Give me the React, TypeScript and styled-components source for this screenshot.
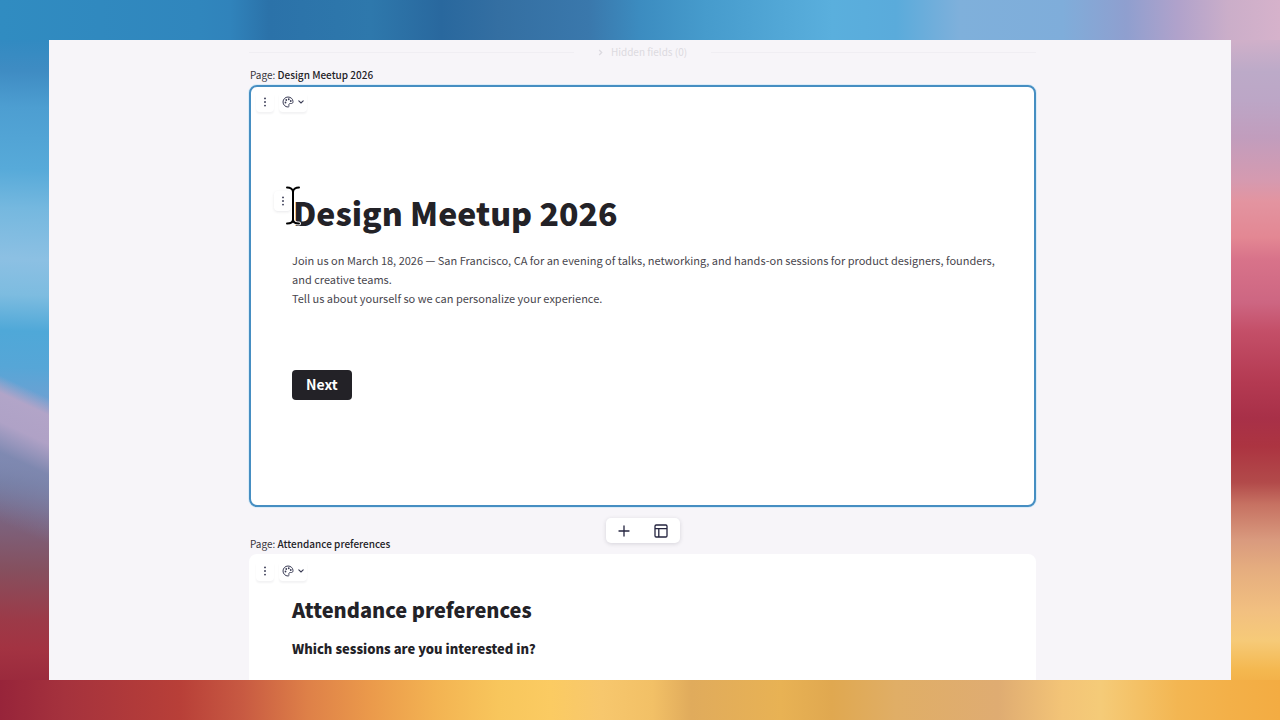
import React from "react";
import styled, { createGlobalStyle, css } from "styled-components";

const GlobalStyle = createGlobalStyle`
  *, *::before, *::after { box-sizing: border-box; }
  body {
    margin: 0;
    font-family: "Noto Sans CJK SC", "Noto Sans", sans-serif;
    color: #232227;
  }
  h1, h2, h3, p { margin: 0; }
  button { font: inherit; color: inherit; border: 0; padding: 0; cursor: pointer; }
`;

const topEdge = `linear-gradient(90deg, #308cc1 0, #3086bd 15.6%, #3083bb 18%, #2b72a9 21%, #2e78ac 29%, #29689e 34.5%, #346fa2 39%, #3a78ac 46%, #3c8cc0 50%, #469bcc 55%, #5aafdd 65%, #5aabdb 70%, #7fb0db 75%, #7fadda 83%, #8f9fcf 88%, #b0a2cb 92%, #cbaec9 96%, #d6b2cb 100%)`;
const bottomEdge = `linear-gradient(90deg, #97243a 0, #a5323d 5%, #b83f38 14%, #c85a42 19%, #de8048 24%, #eb9a4b 29%, #f3b352 34%, #f8c65c 39%, #fbcb62 43%, #f7c76d 47%, #f2c066 51%, #e0ab5c 54%, #e8b254 61%, #e0a850 65%, #e0ae66 70%, #dfac72 78%, #f3c477 83%, #f5cb78 86%, #f3b652 92%, #f3b048 96%, #f3ac42 100%)`;
const leftEdge = `linear-gradient(182deg, #308cc1 0, #318ac1 5.5%, #3f8cc3 10%, #4d9ed1 15%, #57aad9 23.6%, #75b8df 29%, #8cc0e3 36%, #7dbce0 41%, #4fa8d8 46%, #56a6d7 51%, #6fa0d2 56%, #7f91c0 62%, #71799f 67%, #7b6480 72%, #85505f 79%, #9c3a48 86%, #a33342 90%, #98273b 96%, #8f2038 100%)`;
const leftCloud = `linear-gradient(205deg, #b9a5c700 12%, #b9a5c7e6 21%, #b5a3c6e6 36%, #8089b0cc 52%, #71799f00 88%)`;
const rightEdge = `linear-gradient(180deg, #d0b0ca 0, #d0b0c9 5.5%, #bcaac8 10%, #bca6c6 14%, #c19dbd 19%, #d59ab0 25%, #e394a0 28%, #e38793 33%, #d8738a 36%, #cd6682 42%, #c44f68 46%, #b43a52 53%, #a83048 58%, #ac3441 62%, #b24a4a 67%, #c67162 70%, #d99a7e 75%, #e5ad7f 79%, #f2c080 85%, #f6ca78 89%, #f4b850 93%, #f3b048 95%, #f1a53a 100%)`;

const Wallpaper = styled.div`
  display: flex;
  height: 100vh;
  padding: 40px 49px;
  background:
    ${topEdge} top / 100% 40px no-repeat,
    ${bottomEdge} bottom / 100% 40px no-repeat,
    ${leftCloud} 0 375px / 49px 170px no-repeat,
    ${leftEdge} left / 49px 100% no-repeat,
    ${rightEdge} right / 49px 100% no-repeat;
`;

const Editor = styled.main`
  flex: 1;
  min-width: 0;
  overflow: hidden;
  padding-left: 5px;
  background: #f7f5f9;
`;

const Column = styled.div`
  max-width: 787px;
  margin: 0 auto;
`;

const HiddenFields = styled.button`
  display: flex;
  align-items: center;
  gap: 24px;
  width: 100%;
  height: 24px;
  background: none;
  color: #dcdae0;
  font-size: 10px;
  line-height: 16px;

  &::before, &::after {
    content: "";
    flex: 1;
    height: 1px;
    background: #f0eef3;
  }
`;

const HiddenLabel = styled.span`
  display: flex;
  align-items: center;
  gap: 8px;
`;

const PageLabel = styled.p`
  padding-left: 1px;
  font-size: 10px;
  line-height: 21px;
  color: #38363d;

  strong { font-weight: 500; color: #232227; }
`;

const Card = styled.section<{ $selected?: boolean }>`
  border-radius: 8px;
  padding: 5px 5px 0;
  border: 2px solid #fff;
  background: #fff;
  ${(p) =>
    p.$selected
      ? css`
          min-height: 422px;
          border-color: #468ec2;
          box-shadow: 0 0 0 1px #dcecf8;
        `
      : css`
          min-height: 200px;
        `}
`;

const CardTools = styled.div`
  display: flex;
  gap: 5px;
`;

const ToolButton = styled.button<{ $wide?: boolean }>`
  display: flex;
  align-items: center;
  justify-content: center;
  gap: 4px;
  width: ${(p) => (p.$wide ? 28 : 18)}px;
  height: 20px;
  border-radius: 4px;
  background: #fff;
  color: #3a3c55;
  box-shadow: 0 2px 2px #1c1a300d;
`;

const Content = styled.div<{ $intro?: boolean }>`
  padding: ${(p) => (p.$intro ? "74px 28px 0 36px" : "13px 28px 0 36px")};
`;

const TitleBlock = styled.div`
  position: relative;
`;

const Handle = styled.button`
  position: absolute;
  left: -18px;
  top: 5px;
  display: flex;
  align-items: center;
  justify-content: center;
  width: 17px;
  height: 20px;
  border-radius: 4px;
  background: #fff;
  color: #3a3c55;
  box-shadow: 0 1px 3px #1c1a301a;
`;

const Pointer = styled.svg`
  position: absolute;
  left: -7px;
  top: -1px;
`;

const Title = styled.h1`
  padding-left: 1px;
  font-size: 32px;
  line-height: 52px;
  font-weight: 900;
`;

const Intro = styled.p`
  margin-top: 13px;
  font-size: 11px;
  line-height: 19px;
  color: #48464d;
`;

const NextButton = styled.button`
  margin-top: 62px;
  padding: 0 14px 2px;
  height: 30px;
  border-radius: 4px;
  background: #232227;
  color: #fff;
  font-size: 14px;
  font-weight: 700;
  line-height: 28px;
`;

const Divider = styled.div`
  display: grid;
  grid-template-columns: 1fr auto 1fr;
  align-items: center;
  height: 47px;

  ${PageLabel} { align-self: end; }
`;

const InsertBar = styled.div`
  display: flex;
  border-radius: 5px;
  background: #fff;
  box-shadow: 0 1px 4px #1c1a3026;
`;

const InsertButton = styled.button`
  display: flex;
  align-items: center;
  justify-content: center;
  width: 37px;
  height: 25px;
  background: none;
  color: #24243f;
`;

const SectionTitle = styled.h2`
  font-size: 20px;
  line-height: 32px;
  font-weight: 900;
`;

const Question = styled.h3`
  margin-top: 12px;
  font-size: 13px;
  line-height: 22px;
  font-weight: 900;
`;

const Dots = () => (
  <svg width="4" height="10" viewBox="0 0 4 10" fill="currentColor" aria-hidden="true">
    <circle cx="2" cy="1.4" r="0.95" />
    <circle cx="2" cy="5" r="0.95" />
    <circle cx="2" cy="8.6" r="0.95" />
  </svg>
);

const Palette = () => (
  <svg width="12" height="12" viewBox="0 0 24 24" fill="none" stroke="currentColor" strokeWidth="2" aria-hidden="true">
    <path d="M12 2C6.500 2 2 6.500 2 12s4.500 10 10 10c1.700 0 2.300-1.300 1.800-2.800-.8-2.400.5-4.200 2.900-4.200H19c2 0 3-1.500 3-4C22 6 17.500 2 12 2z" />
    <g fill="currentColor" stroke="none">
      <circle cx="7" cy="13" r="1.800" />
      <circle cx="8.500" cy="8" r="1.800" />
      <circle cx="13.500" cy="6.500" r="1.800" />
      <circle cx="17.500" cy="10" r="1.800" />
    </g>
  </svg>
);

const Chevron = () => (
  <svg width="6" height="4" viewBox="0 0 6 4" fill="none" stroke="currentColor" strokeWidth="1.1" strokeLinecap="round" aria-hidden="true">
    <path d="M0.800 0.900 3 3 5.200 0.900" />
  </svg>
);

const ChevronRight = () => (
  <svg width="5" height="7" viewBox="0 0 5 7" fill="none" stroke="currentColor" strokeWidth="1.300" aria-hidden="true">
    <path d="M1.200 1 3.700 3.500 1.200 6" />
  </svg>
);

const Plus = () => (
  <svg width="12" height="12" viewBox="0 0 12 12" fill="none" stroke="currentColor" strokeWidth="1.300" strokeLinecap="round" aria-hidden="true">
    <path d="M6 1v10M1 6h10" />
  </svg>
);

const Layout = () => (
  <svg width="14" height="14" viewBox="0 0 14 14" fill="none" stroke="currentColor" strokeWidth="1.300" aria-hidden="true">
    <rect x="1" y="1" width="12" height="12" rx="1.200" />
    <path d="M1 4.600h12M4.800 4.600V13" />
  </svg>
);

const TextPointer = () => (
  <Pointer width="16" height="42" viewBox="0 0 16 42" fill="none" strokeLinecap="round" aria-hidden="true">
    <path d="M2 2.500c3 0 6 1.600 6 4.500 0-2.900 3-4.500 6-4.500M8 7v28M2 38.500c3 0 6-1.200 6-4 0 2.800 3 4 6 4" stroke="#fff" strokeWidth="4" />
    <path d="M2 2.500c3 0 6 1.600 6 4.500 0-2.900 3-4.500 6-4.500M8 7v28M2 38.500c3 0 6-1.200 6-4 0 2.800 3 4 6 4" stroke="#000" strokeWidth="2" />
  </Pointer>
);

const PageTools = () => (
  <CardTools>
    <ToolButton aria-label="Page options"><Dots /></ToolButton>
    <ToolButton $wide aria-label="Page theme"><Palette /><Chevron /></ToolButton>
  </CardTools>
);

export default function App() {
  return (
    <>
      <GlobalStyle />
      <Wallpaper>
        <Editor>
          <Column>
            <HiddenFields>
              <HiddenLabel><ChevronRight />Hidden fields (0)</HiddenLabel>
            </HiddenFields>
            <PageLabel>Page: <strong>Design Meetup 2026</strong></PageLabel>
            <Card $selected>
              <PageTools />
              <Content $intro>
                <TitleBlock>
                  <Title>Design Meetup 2026</Title>
                  <Handle aria-label="Block options"><Dots /></Handle>
                  <TextPointer />
                </TitleBlock>
                <Intro>
                  Join us on March 18, 2026 — San Francisco, CA for an evening of talks, networking, and hands-on sessions for product designers, founders, and creative teams.
                  <br />
                  Tell us about yourself so we can personalize your experience.
                </Intro>
                <NextButton>Next</NextButton>
              </Content>
            </Card>
            <Divider>
              <PageLabel>Page: <strong>Attendance preferences</strong></PageLabel>
              <InsertBar>
                <InsertButton aria-label="Add page"><Plus /></InsertButton>
                <InsertButton aria-label="Choose layout"><Layout /></InsertButton>
              </InsertBar>
            </Divider>
            <Card>
              <PageTools />
              <Content>
                <SectionTitle>Attendance preferences</SectionTitle>
                <Question>Which sessions are you interested in?</Question>
              </Content>
            </Card>
          </Column>
        </Editor>
      </Wallpaper>
    </>
  );
}
